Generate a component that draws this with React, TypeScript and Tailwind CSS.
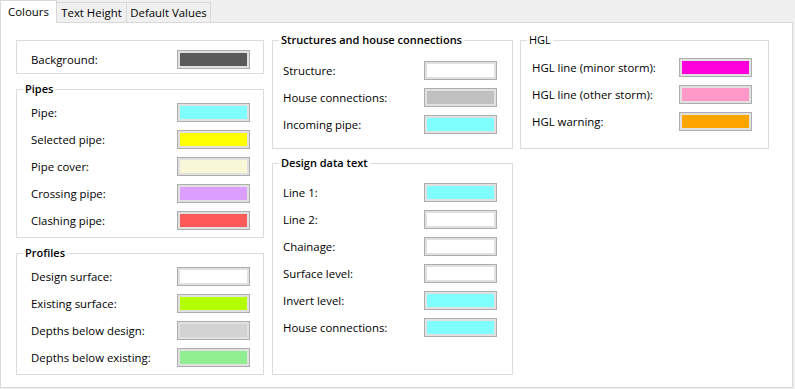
import React from "react";

type Row = { label: string; color: string };

function Swatch({ color }: { color: string }) {
  return (
    <div className="w-[73px] h-[19px] shrink-0 border border-[#adadad] bg-[#e1e1e1] p-[2px]">
      <div className="w-full h-full" style={{ backgroundColor: color }} />
    </div>
  );
}

function Rows({ rows }: { rows: Row[] }) {
  return (
    <div className="flex flex-col gap-[8px]">
      {rows.map((r) => (
        <div key={r.label} className="flex items-center justify-between h-[19px]">
          <span className="leading-[16px] text-[11.4px]">{r.label}</span>
          <Swatch color={r.color} />
        </div>
      ))}
    </div>
  );
}

function Group({
  title,
  bold = true,
  className,
  children,
}: {
  title?: string;
  bold?: boolean;
  className: string;
  children: React.ReactNode;
}) {
  return (
    <div className={`relative border border-[#dcdcdc] ${className}`}>
      {title && (
        <span
          className={`absolute -top-[9px] left-[6px] bg-white px-[2px] leading-[16px] text-[11px] ${
            bold ? "font-semibold" : "font-normal text-[11.4px]"
          }`}
        >
          {title}
        </span>
      )}
      {children}
    </div>
  );
}

export default function App() {
  return (
    <div
      className="w-[795px] h-[389px] bg-[#f0f0f0] text-[11.4px] text-black"
      style={{ fontFamily: '"Open Sans", "Noto Sans", sans-serif' }}
    >
      <div className="flex items-end h-[22px]">
        <div className="relative z-10 -mb-px h-[23px] w-[57px] bg-white border border-b-0 border-[#d9d9d9] flex items-center justify-center leading-[16px]">
          Colours
        </div>
        <div className="h-[20px] w-[70px] bg-[#f0f0f0] border border-b-0 border-l-0 border-[#d9d9d9] flex items-center justify-center leading-[16px]">
          Text Height
        </div>
        <div className="h-[20px] w-[84px] bg-[#f0f0f0] border border-b-0 border-l-0 border-[#d9d9d9] flex items-center justify-center leading-[16px]">
          Default Values
        </div>
      </div>
      <div className="w-[793px] h-[366px] bg-white border border-[#d9d9d9] pl-[15px] pt-[17px] flex items-start">
        {/* Column 1 */}
        <div className="w-[248px] flex flex-col gap-[15px]">
          <Group className="pl-[14px] pr-[13px] pt-[9px] pb-[4px]">
            <Rows rows={[{ label: "Background:", color: "#595959" }]} />
          </Group>
          <Group title="Pipes" className="pl-[14px] pr-[13px] pt-[13px] pb-[7px]">
            <Rows
              rows={[
                { label: "Pipe:", color: "#80ffff" },
                { label: "Selected pipe:", color: "#ffff00" },
                { label: "Pipe cover:", color: "#f8f8d8" },
                { label: "Crossing pipe:", color: "#dc9fff" },
                { label: "Clashing pipe:", color: "#ff5a5a" },
              ]}
            />
          </Group>
          <Group title="Profiles" className="pl-[14px] pr-[13px] pt-[13px] pb-[7px]">
            <Rows
              rows={[
                { label: "Design surface:", color: "#ffffff" },
                { label: "Existing surface:", color: "#b4ff00" },
                { label: "Depths below design:", color: "#d3d3d3" },
                { label: "Depths below existing:", color: "#90ee90" },
              ]}
            />
          </Group>
        </div>
        {/* Column 2 */}
        <div className="ml-[8px] w-[241px] flex flex-col gap-[14px]">
          <Group
            title="Structures and house connections"
            className="pl-[10px] pr-[15px] pt-[20px] pb-[14px]"
          >
            <Rows
              rows={[
                { label: "Structure:", color: "#ffffff" },
                { label: "House connections:", color: "#c0c0c0" },
                { label: "Incoming pipe:", color: "#80ffff" },
              ]}
            />
          </Group>
          <Group title="Design data text" className="h-[212px] pl-[10px] pr-[15px] pt-[19px]">
            <Rows
              rows={[
                { label: "Line 1:", color: "#80ffff" },
                { label: "Line 2:", color: "#ffffff" },
                { label: "Chainage:", color: "#ffffff" },
                { label: "Surface level:", color: "#ffffff" },
                { label: "Invert level:", color: "#80ffff" },
                { label: "House connections:", color: "#80ffff" },
              ]}
            />
          </Group>
        </div>
        {/* Column 3 */}
        <div className="ml-[7px] w-[249px]">
          <Group title="HGL" bold={false} className="pl-[11px] pr-[16px] pt-[17px] pb-[17px]">
            <Rows
              rows={[
                { label: "HGL line (minor storm):", color: "#ff00dc" },
                { label: "HGL line (other storm):", color: "#ff99c8" },
                { label: "HGL warning:", color: "#ffa500" },
              ]}
            />
          </Group>
        </div>
      </div>
    </div>
  );
}
